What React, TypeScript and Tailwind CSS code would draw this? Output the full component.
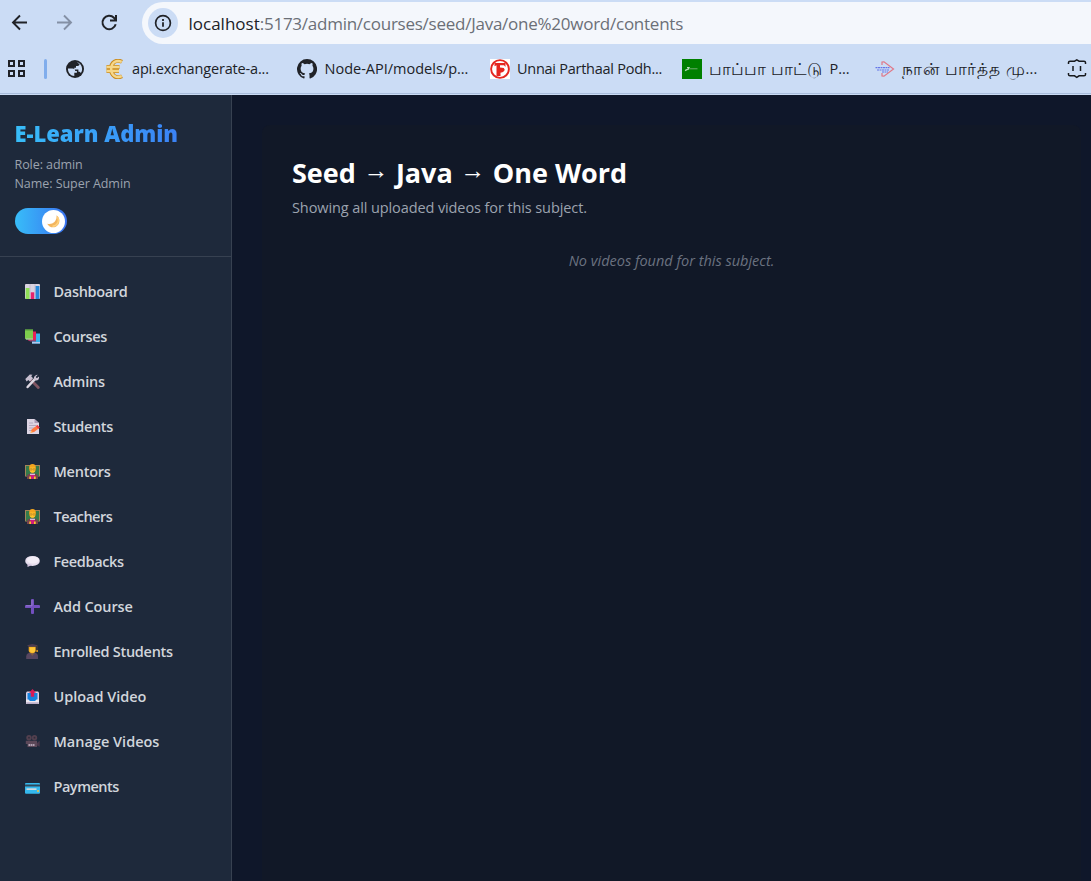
import type { ReactNode } from 'react';

function Svg({ children }: { children: ReactNode }) {
  return (
    <svg className="h-[15px] w-[15px] shrink-0" viewBox="0 0 15 15" fill="none">
      {children}
    </svg>
  );
}

const ChartIcon = () => (
  <Svg>
    <rect width="15" height="15" rx="1" fill="#d9d3e0" />
    <path d="M5 0v15M10 0v15" stroke="#bdb2c9" strokeWidth=".7" />
    <rect x=".7" y="4" width="3.8" height="11" fill="#8fdf57" />
    <rect x="5.8" y="8.3" width="3.4" height="6.7" fill="#e5246c" />
    <rect x="10.6" y="2" width="3.8" height="13" fill="#2589dc" />
  </Svg>
);
const BooksIcon = () => (
  <Svg>
    <path d="M7 4.5h8v10H7z" fill="#35b5ee" />
    <path d="M7 13h8v1.5H7z" fill="#b4c8ee" />
    <path d="M3.5 2.5H11v9.5H3.5z" fill="#e62158" />
    <path d="M3.5 10.8H11V12.5H5z" fill="#9a4770" />
    <path d="M0 .5h8v10H1.2L0 9.6z" fill="#7dcc4d" />
    <path d="M0 .5h8v1H0z" fill="#55973e" />
    <path d="M.5 9.4H8v1.1H1z" fill="#b8c8b4" />
  </Svg>
);
const ToolsIcon = () => (
  <Svg>
    <path d="m6.500 6.500 6.800 7" stroke="#805663" strokeWidth="2.800" strokeLinecap="round" />
    <path d="M.3 5.100 4.800.6l2.700.2L6.200 2.300l1.900 2-3.300 3.200-1.500-1.500L1.600 7.500z" fill="#c8bfd0" />
    <path d="m2.600 13 7.700-8.400" stroke="#ded8e3" strokeWidth="2.500" strokeLinecap="round" />
    <path d="M12.800.8 10.600 3l1.200 1.300L14 2.400c.5 2.500-1 4.600-3.600 4.100C8 5.500 8.300 1.300 12.800.8Z" fill="#cbc2d2" />
  </Svg>
);
const MemoIcon = () => (
  <Svg>
    <path d="M2 0h7.500l4.500 4v11H2z" fill="#ddd5e4" />
    <path d="M9.500 0v4H14z" fill="#a99bb6" />
    <path d="M4 4h4M4 6.500h7M4 9h6M4 11.500h3" stroke="#aa9eb5" strokeWidth=".8" />
    <path d="m5.500 13.700 1-3.300 5.800-4.200 2.300 2.500-5.500 4.400z" fill="#ff7940" />
    <path d="m11 7 1.500-1.100 2.200 2.600-1.400 1.200z" fill="#ed3847" />
    <path d="m5.500 13.700.7-2 1.500 1.500z" fill="#ffc15c" />
  </Svg>
);
const TeacherIcon = () => (
  <Svg>
    <path d="M0 1h15v11.500H0z" fill="#a48358" />
    <path d="M1 2h13v10H1z" fill="#347b4a" />
    <path d="M2 15v-2.500c0-2 1.500-3 5.500-3s5.500 1 5.500 3V15z" fill="#78424e" />
    <path d="M5 10h5l-.8 5H5.800z" fill="#cf1e7c" />
    <ellipse cx="7.500" cy="4.300" rx="3.400" ry="4.200" fill="#f4a51e" />
    <path d="M5 3.400h5v3.800c-1 2-4 2-5 0z" fill="#ffc42b" />
    <path d="M4.700 4.700h2.300v1.400H4.900zm3.300 0h2.300l-.2 1.400H8z" stroke="#a8742a" strokeWidth=".5" />
    <path d="M5 10.300h5" stroke="#ddd0e6" strokeWidth="1.200" />
    <path d="M4.300 12.500h1.700V15H4.300zm4.700 0h1.700V15H9z" fill="#ffc32a" />
  </Svg>
);
const SpeechIcon = () => (
  <Svg>
    <ellipse cx="7.500" cy="6.900" rx="7.300" ry="5" fill="#e7deee" />
    <path d="m2.500 9.500 0 3.600 4.500-2z" fill="#d4c5df" />
    <ellipse cx="8" cy="6" rx="6" ry="3.500" fill="#f3edf7" />
  </Svg>
);
const PlusIcon = () => (
  <Svg>
    <path d="M7.500 1.300v12.400M1.300 7.500h12.400" stroke="#7350bf" strokeWidth="3" strokeLinecap="round" />
    <path d="M7 1v5.800H1" stroke="#9a82cf" strokeWidth=".8" />
  </Svg>
);
const GraduateIcon = () => (
  <Svg>
    <path d="M1.200 15v-2.400c0-2.700 2-4 6-4s5.800 1.300 5.800 4V15z" fill="#56465f" />
    <path d="M4.800 9h5l-2.500 3z" fill="#7a5947" />
    <path d="M3.700 2.500h7v4.500c-1 3-6 3-7 0z" fill="#f4ac1f" />
    <path d="M5 3.500h5v3.700C9 9 6 9 5 7.200z" fill="#ffc738" />
    <path d="M2 1.200 7.300 0l5.300 1.200-2 1.500H4z" fill="#4c3c52" />
    <path d="M12 1.500v5" stroke="#705035" strokeWidth=".7" />
    <circle cx="12.100" cy="7" r="1" fill="#e59b20" />
  </Svg>
);
const OutboxIcon = () => (
  <Svg>
    <path d="M1 3.500 2 2.500h11l1 1V15H1z" fill="#d8d0e4" />
    <path d="M2.500 4h10v8h-10z" fill="#1683df" />
    <path d="M1 10.500h2.500l1.500 1.500h5l1.500-1.500H14V15H1z" fill="#eee9f2" />
    <path d="M1.200 13.300h12.600V15H1.200z" fill="#bbaec8" />
    <path d="M7.500 0 11 3.800H9.200V7.700H5.800V3.800H4z" fill="#d71b57" />
  </Svg>
);
const CameraIcon = () => (
  <Svg>
    <circle cx="4" cy="3.700" r="2.700" fill="#53404f" />
    <circle cx="9.500" cy="3.700" r="2.700" fill="#53404f" />
    <circle cx="4" cy="3.700" r=".9" fill="#2f2d3b" />
    <circle cx="9.500" cy="3.700" r=".9" fill="#2f2d3b" />
    <path d="M.8 6.700H12v6.200H2.500V10H.8z" fill="#5c4859" />
    <path d="m12 9 2.700-2.200v6L12 11.500z" fill="#49374c" />
    <path d="M3.500 10h6v2h-6z" fill="#b2a2b3" />
    <path d="M5.500 10v2m2-2v2" stroke="#59455a" strokeWidth=".5" />
  </Svg>
);
const CardIcon = () => (
  <Svg>
    <rect y="4" width="15" height="10.800" rx="1" fill="#35b8ed" />
    <path d="M0 5.500h15v2H0z" fill="#30485a" />
    <path d="M1.500 9.300h10v1.700h-10z" fill="#cfd9df" />
    <circle cx="13" cy="12" r="1" fill="#f5c33d" />
  </Svg>
);

const MENU: { label: string; icon: ReactNode; tracking: string }[] = [
  { label: 'Dashboard', icon: <ChartIcon />, tracking: 'tracking-[-0.32px]' },
  { label: 'Courses', icon: <BooksIcon />, tracking: 'tracking-[-0.36px]' },
  { label: 'Admins', icon: <ToolsIcon />, tracking: 'tracking-[-0.25px]' },
  { label: 'Students', icon: <MemoIcon />, tracking: 'tracking-[-0.36px]' },
  { label: 'Mentors', icon: <TeacherIcon />, tracking: 'tracking-[-0.25px]' },
  { label: 'Teachers', icon: <TeacherIcon />, tracking: 'tracking-[-0.55px]' },
  { label: 'Feedbacks', icon: <SpeechIcon />, tracking: 'tracking-[-0.36px]' },
  { label: 'Add Course', icon: <PlusIcon />, tracking: 'tracking-[-0.1px]' },
  { label: 'Enrolled Students', icon: <GraduateIcon />, tracking: 'tracking-[-0.27px]' },
  { label: 'Upload Video', icon: <OutboxIcon />, tracking: 'tracking-[-0.03px]' },
  { label: 'Manage Videos', icon: <CameraIcon />, tracking: 'tracking-[0px]' },
  { label: 'Payments', icon: <CardIcon />, tracking: 'tracking-[-0.48px]' },
];

function Toolbar() {
  return (
    <div className="flex h-[49px] items-start">
      <svg className="ml-[8px] mt-[11px] h-6 w-6" viewBox="0 0 24 24" fill="none" stroke="#202227" strokeWidth="1.900">
        <path d="M19 11.500H5m7-7-7 7 7 7" />
      </svg>
      <svg className="ml-[21px] mt-[11px] h-6 w-6" viewBox="0 0 24 24" fill="none" stroke="#8490a5" strokeWidth="1.900">
        <path d="M4 11.500h14m-7-7 7 7-7 7" />
      </svg>
      <svg className="ml-[20px] mt-[10px] h-6 w-6" viewBox="0 0 24 24" fill="none" stroke="#202227" strokeWidth="2">
        <path d="M18.700 14.200A6.700 6.700 0 1 1 17 7.800l1.500 2" />
        <path d="M19 5v5.500h-6" />
      </svg>
      <div className="ml-[21px] mt-[2px] flex h-[42px] flex-1 items-center rounded-l-full bg-[#f4f7fc] pl-[6px]">
        <span className="flex h-[30px] w-[30px] items-center justify-center rounded-full bg-[#cbdcf5]">
          <svg className="h-[18px] w-[18px]" viewBox="0 0 18 18" fill="none" stroke="#202227">
            <circle cx="9" cy="9" r="7.400" strokeWidth="1.700" />
            <path d="M9 8.200v4.600M9 5v1.900" strokeWidth="1.800" />
          </svg>
        </span>
        <span className="ml-[10.5px] whitespace-nowrap pt-px text-[17px] leading-6 text-[#202227]">
          localhost<span className="tracking-[-0.25px] text-[#6b6f77]">:5173/admin/courses/seed/Java/one%20word/contents</span>
        </span>
      </div>
    </div>
  );
}

function Bookmark({ icon, width, children }: { icon: ReactNode; width: string; children: ReactNode }) {
  return (
    <div className={`flex shrink-0 items-center whitespace-nowrap ${width}`}>
      {icon}
      {children}
    </div>
  );
}

function Bookmarks() {
  return (
    <div className="flex h-[45px] items-center overflow-hidden border-b border-[#a9bddb] pb-[5px] text-[14.5px] leading-5 text-[#202227]">
      <svg className="ml-[7px] h-[19px] w-[19px] shrink-0" viewBox="0 0 19 19" fill="none" stroke="#202227" strokeWidth="2">
        <path d="M2 2h5v5H2zM12 2h5v5h-5zM2 12h5v5H2zM12 12h5v5h-5z" />
      </svg>
      <span className="ml-[18px] h-5 w-[3px] shrink-0 rounded-full bg-[#80adec]" />
      <svg className="ml-[19px] mr-[21px] h-[18px] w-[18px] shrink-0" viewBox="0 0 18 18">
        <circle cx="9" cy="9" r="9" fill="#202227" />
        <path d="M1.900 8.500h4.600c1.700 0 2.700 1 2.700 2.600h1.700v1.700H8.300v3.200c-3.600-.1-6.400-3.300-6.400-7.500ZM10.800 2.100c3 .9 5.300 3.500 5.300 6.900 0 1.600-.5 3-1.300 4.100-.3-.8-1-1.400-1.900-1.400h-.5V9.500H8.300V7.700H10V6h1.700c1 0 1.800-.8 1.800-1.700z" fill="#cbdcf5" />
      </svg>
      <Bookmark
        width="w-[192px]"
        icon={
          <svg className="mr-[7px] h-5 w-5" viewBox="0 0 20 20" fill="none">
            <path d="M17 2.800C11.500-.1 6 3.200 6 10s5.500 10.100 11 7.200M1.500 8h13M1.500 12H14" stroke="#c98b20" strokeWidth="4" />
            <path d="M16.700 2.800C11.500.4 6.200 3.500 6.200 10s5.300 9.600 10.500 7.200M1.500 8h13M1.500 12H14" stroke="#f6d789" strokeWidth="2.400" />
          </svg>
        }
      >
        <span className="tracking-[-0.17px]">api.exchangerate-a...</span>
      </Bookmark>
      <Bookmark
        width="w-[193px]"
        icon={
          <svg className="mr-[7.5px] h-5 w-5" viewBox="0 0 16 16" fill="#202227">
            <path d="M8 0a8 8 0 0 0-2.530 15.590c.4.070.55-.17.55-.38v-1.490c-2.010.37-2.530-.49-2.690-.94-.09-.23-.48-.94-.82-1.130-.28-.15-.68-.52-.01-.53.63-.01 1.080.58 1.230.82.72 1.210 1.870.87 2.330.66.070-.52.280-.87.510-1.070-1.780-.2-3.640-.89-3.640-3.950 0-.87.310-1.590.820-2.150-.08-.2-.36-1.020.080-2.120 0 0 .67-.21 2.200.82a7.600 7.600 0 0 1 4 0c1.530-1.040 2.200-.82 2.200-.82.440 1.100.160 1.920.080 2.120.510.560.820 1.270.820 2.150 0 3.070-1.870 3.750-3.650 3.950.290.250.540.730.540 1.480v2.200c0 .210.150.460.550.380A8 8 0 0 0 8 0Z" />
          </svg>
        }
      >
        <span>Node-API/models/p...</span>
      </Bookmark>
      <Bookmark
        width="w-[192px]"
        icon={
          <svg className="mr-[7px] h-5 w-5" viewBox="0 0 20 20" fill="none">
            <path d="M0 0h20v20H0z" fill="#fff" />
            <circle cx="10" cy="10" r="8.900" stroke="#e52620" strokeWidth="1.900" />
            <path d="M4.500 4h11v4l-1.500-1.700h-4v2.200L13.800 9l1 2-1.700 2-2.600.8V17H6.500V6.300L4.500 7.200z" fill="#e52620" />
          </svg>
        }
      >
        <span className="tracking-[-0.26px]">Unnai Parthaal Podh...</span>
      </Bookmark>
      <Bookmark
        width="w-[193px]"
        icon={
          <svg className="mr-[7px] h-5 w-5" viewBox="0 0 20 20" fill="none">
            <path d="M0 0h20v20H0z" fill="#008000" />
            <path d="M5 8.600h2l-.5 1.500-2.300.8-1 .9" stroke="#b9dcb9" strokeWidth="1.300" />
            <path d="M7.500 9.700h8" stroke="#4d9f4d" strokeWidth="1.400" />
          </svg>
        }
      >
        <span className="text-[17px] font-medium tracking-[0.15px]">பாப்பா பாட்டு</span>
        <span className="ml-[7px]">P...</span>
      </Bookmark>
      <Bookmark
        width="w-[192px]"
        icon={
          <svg className="mr-[7px] h-5 w-5" viewBox="0 0 20 20" fill="none">
            <path d="M7 6V3l2-.2L18.500 10 9 17.200l-2-.2v-3" stroke="#e07787" strokeWidth="1.200" />
            <path d="M.5 8.700h14M2 11h12M7 13h6" stroke="#6576e8" strokeWidth="1.200" strokeDasharray="2 .5" />
          </svg>
        }
      >
        <span className="text-[17px] font-medium tracking-[0.75px]">நான் பார்த்த மு</span>
        <span className="tracking-[0.2px]">...</span>
      </Bookmark>
      <svg className="h-5 w-5 shrink-0" viewBox="0 0 20 20" fill="none" stroke="#17191d" strokeWidth="1.500">
        <path d="M1.500 5V3.500q0-1.300 1.500-1.300h4.500L9.800.9l2.300 1.300H17q1.500 0 1.500 1.300V5M1.500 14v1.500q0 1.300 1.500 1.300h4.500l2.300 1.500 2.300-1.500H17q1.500 0 1.500-1.300V14M6 7v5M13.500 7v5" />
      </svg>
    </div>
  );
}

function Sidebar() {
  return (
    <aside className="flex w-[232px] shrink-0 flex-col border-r border-[#374151] bg-[#1e293b]">
      <div className="h-[162px] border-b border-[#374151] pl-[14.5px] pt-[22px]">
        <h1 className="w-fit bg-gradient-to-r from-[#38bdf8] to-[#3b82f6] bg-clip-text text-[22px] font-extrabold leading-[32px] tracking-[-0.03px] text-transparent">
          E-Learn Admin
        </h1>
        <p className="mt-[6px] text-[12.5px] leading-[19px] tracking-[-0.07px] text-[#9ca3af]">Role: admin</p>
        <p className="text-[12.5px] leading-[19px] tracking-[-0.05px] text-[#9ca3af]">Name: Super Admin</p>
        <div className="ml-[0.5px] mt-[15px] flex h-[26px] w-[52px] items-center justify-end rounded-full bg-gradient-to-r from-[#38bdf8] to-[#3b72f0] pr-[2px]">
          <span className="flex h-[23px] w-[23px] items-center justify-center rounded-full bg-white">
            <svg className="h-[13px] w-[13px]" viewBox="0 0 13 13">
              <path d="M9.500.3c4.300 3 3.700 9.200-.6 11.400-3.200 1.500-7 .4-8.700-3C5.300 10.100 10.300 6.600 9.500.3Z" fill="#f3b55e" />
              <path d="M10.500 2.200c2.300 4-.2 8.800-5 9" fill="none" stroke="#ffd27d" strokeWidth="1.500" />
            </svg>
          </span>
        </div>
      </div>
      <nav className="flex flex-col pt-[12px]">
        {MENU.map((item) => (
          <a key={item.label} className="flex h-[45px] items-center pl-[25px]">
            {item.icon}
            <span className={`ml-[13.5px] text-[14.5px] font-semibold leading-6 text-[#d1d5db] ${item.tracking}`}>{item.label}</span>
          </a>
        ))}
      </nav>
    </aside>
  );
}

function Arrow() {
  return <span className="inline-block w-[40px] pb-[7px] text-center text-[25px] font-normal leading-none">→</span>;
}

export default function App() {
  return (
    <div className="flex h-[881px] w-[1091px] flex-col overflow-hidden font-['Open_Sans','Noto_Sans',sans-serif]">
      <header className="h-[95px] shrink-0 bg-[#cbdcf5]">
        <Toolbar />
        <Bookmarks />
      </header>
      <div className="flex min-h-0 flex-1">
        <Sidebar />
        <main className="flex flex-1 bg-[#0f172a] pl-[30px] pr-[10px] pt-[30px]">
          <section className="flex-1 rounded-tl-lg rounded-tr-lg bg-[#111827] px-[30px] pt-[30px]">
            <h2 className="flex h-[36px] items-center whitespace-nowrap text-[27px] font-bold leading-[36px] text-white">
              Seed
              <Arrow />
              Java
              <Arrow />
              One Word
            </h2>
            <p className="mt-[5px] text-[14.5px] leading-[23px] tracking-[-0.1px] text-[#9ca3af]">
              Showing all uploaded videos for this subject.
            </p>
            <p className="mt-[30px] text-center text-[14.5px] italic leading-[23px] text-[#6b7280]">
              No videos found for this subject.
            </p>
          </section>
        </main>
      </div>
    </div>
  );
}
